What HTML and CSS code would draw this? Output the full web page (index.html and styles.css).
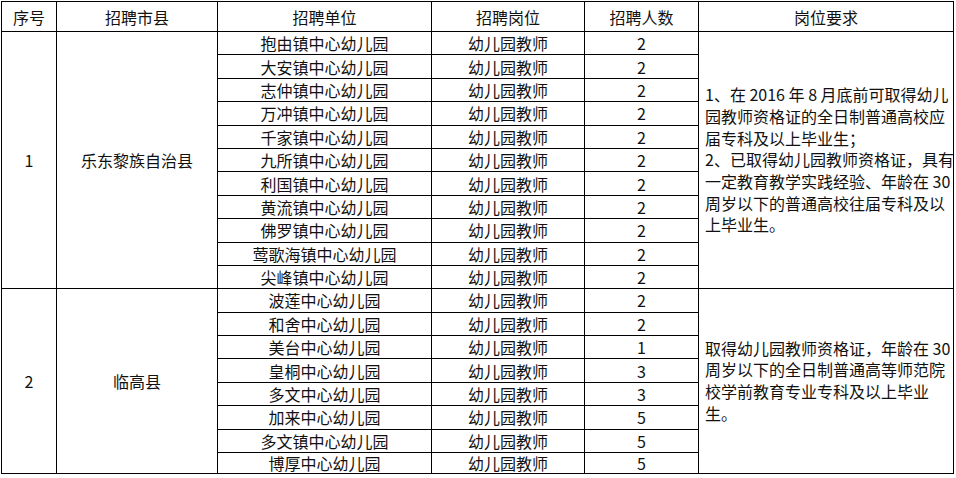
FILE: index.html
```html
<!DOCTYPE html>
<html lang="zh-CN">
<head>
<meta charset="utf-8">
<title>招聘</title>
<link rel="stylesheet" href="styles.css">
</head>
<body>
<table class="grid">
  <colgroup>
    <col class="c-no">
    <col class="c-city">
    <col class="c-unit">
    <col class="c-post">
    <col class="c-num">
    <col class="c-req">
  </colgroup>
  <thead>
    <tr class="head">
      <th>序号</th><th>招聘市县</th><th>招聘单位</th><th>招聘岗位</th><th>招聘人数</th><th>岗位要求</th>
    </tr>
  </thead>
  <tbody>
    <tr class="row">
      <td rowspan="11">1</td>
      <td rowspan="11">乐东黎族自治县</td>
      <td>抱由镇中心幼儿园</td><td>幼儿园教师</td><td>2</td>
      <td rowspan="11" class="req">1、在 2016 年 8 月底前可取得幼儿<br>园教师资格证的全日制普通高校应<br>届专科及以上毕业生；<br>2、已取得幼儿园教师资格证，具有<br>一定教育教学实践经验、年龄在 30<br>周岁以下的普通高校往届专科及以<br>上毕业生。</td>
    </tr>
    <tr class="row"><td>大安镇中心幼儿园</td><td>幼儿园教师</td><td>2</td></tr>
    <tr class="row"><td>志仲镇中心幼儿园</td><td>幼儿园教师</td><td>2</td></tr>
    <tr class="row"><td>万冲镇中心幼儿园</td><td>幼儿园教师</td><td>2</td></tr>
    <tr class="row"><td>千家镇中心幼儿园</td><td>幼儿园教师</td><td>2</td></tr>
    <tr class="row"><td>九所镇中心幼儿园</td><td>幼儿园教师</td><td>2</td></tr>
    <tr class="row"><td>利国镇中心幼儿园</td><td>幼儿园教师</td><td>2</td></tr>
    <tr class="row"><td>黄流镇中心幼儿园</td><td>幼儿园教师</td><td>2</td></tr>
    <tr class="row"><td>佛罗镇中心幼儿园</td><td>幼儿园教师</td><td>2</td></tr>
    <tr class="row"><td>莺歌海镇中心幼儿园</td><td>幼儿园教师</td><td>2</td></tr>
    <tr class="row"><td>尖峰镇中心幼儿园</td><td>幼儿园教师</td><td>2</td></tr>
    <tr class="row">
      <td rowspan="8">2</td>
      <td rowspan="8">临高县</td>
      <td>波莲中心幼儿园</td><td>幼儿园教师</td><td>2</td>
      <td rowspan="8" class="req">取得幼儿园教师资格证，年龄在 30<br>周岁以下的全日制普通高等师范院<br>校学前教育专业专科及以上毕业<br>生。</td>
    </tr>
    <tr class="row"><td>和舍中心幼儿园</td><td>幼儿园教师</td><td>2</td></tr>
    <tr class="row"><td>美台中心幼儿园</td><td>幼儿园教师</td><td>1</td></tr>
    <tr class="row"><td>皇桐中心幼儿园</td><td>幼儿园教师</td><td>3</td></tr>
    <tr class="row"><td>多文中心幼儿园</td><td>幼儿园教师</td><td>3</td></tr>
    <tr class="row"><td>加来中心幼儿园</td><td>幼儿园教师</td><td>5</td></tr>
    <tr class="row"><td>多文镇中心幼儿园</td><td>幼儿园教师</td><td>5</td></tr>
    <tr class="row last"><td>博厚中心幼儿园</td><td>幼儿园教师</td><td>5</td></tr>
  </tbody>
</table>
</body>
</html>
```

FILE: styles.css
```css
html, body {
  margin: 0;
  padding: 0;
  background: #ffffff;
}

body {
  padding: 1px 0 0 1px;
  font-family: "Noto Sans CJK SC", "Noto Sans", sans-serif;
  font-size: 16px;
  color: #111111;
}

.grid {
  border-collapse: collapse;
  table-layout: fixed;
  width: 953px;
}

.c-no { width: 55px; }
.c-city { width: 161px; }
.c-unit { width: 214px; }
.c-post { width: 153px; }
.c-num { width: 114px; }
.c-req { width: 255px; }

.grid th,
.grid td {
  border: 1px solid #000000;
  padding: 0;
  text-align: center;
  vertical-align: middle;
  font-weight: normal;
  line-height: 20px;
  white-space: nowrap;
}

.head { height: 30px; }
.row { height: 23.4px; }
.row.last { height: 21px; }

.grid td.req {
  text-align: left;
  padding: 0 2px 0 6px;
  line-height: 21.7px;
}
```
